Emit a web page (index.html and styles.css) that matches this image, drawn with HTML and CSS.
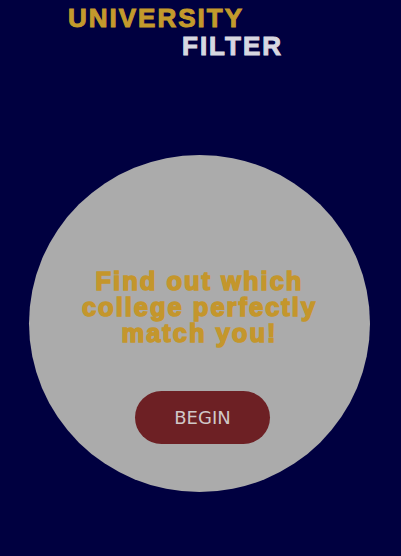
FILE: index.html
```html
<!DOCTYPE html>
<html>
<head>
<meta charset="utf-8">
<link rel="stylesheet" href="styles.css">
</head>
<body>
<header class="brand">
  <div class="brand-top">UNIVERSITY</div>
  <div class="brand-bottom">FILTER</div>
</header>
<main class="stage">
  <section class="circle">
    <h1 class="tagline">Find out which<br>college perfectly<br>match you!</h1>
    <button class="begin">BEGIN</button>
  </section>
</main>
</body>
</html>
```

FILE: styles.css
```css
html, body {
  margin: 0;
  padding: 0;
  background: #000040;
  width: 401px;
  height: 556px;
  overflow: hidden;
}
.brand {
  padding: 4px 0 0 68px;
  font-family: "Liberation Sans", Arial, sans-serif;
  font-weight: 700;
  font-size: 26px;
  letter-spacing: 2px;
  line-height: 28px;
  -webkit-text-stroke: 1px currentColor;
}
.brand-top {
  color: #c39a2c;
}
.brand-bottom {
  color: #d7d7e0;
  margin-left: 114px;
}
.stage {
  padding: 95px 0 0 29px;
}
.circle {
  width: 341px;
  height: 337px;
  border-radius: 50%;
  background: #ababab;
  display: flex;
  flex-direction: column;
  align-items: center;
  box-sizing: border-box;
  padding-top: 113px;
}
.tagline {
  margin: 0;
  font-family: "Liberation Sans", Arial, sans-serif;
  font-weight: 700;
  font-size: 25.5px;
  line-height: 26px;
  letter-spacing: 2px;
  text-align: center;
  color: #c4962c;
  -webkit-text-stroke: 1.5px currentColor;
}
.begin {
  margin: 45px 0 0 6px;
  width: 135px;
  height: 53px;
  border: none;
  border-radius: 27px;
  background: #6d2024;
  color: #d0c8c8;
  font-family: "DejaVu Sans", Verdana, sans-serif;
  font-size: 18px;
  padding: 0;
}
```
